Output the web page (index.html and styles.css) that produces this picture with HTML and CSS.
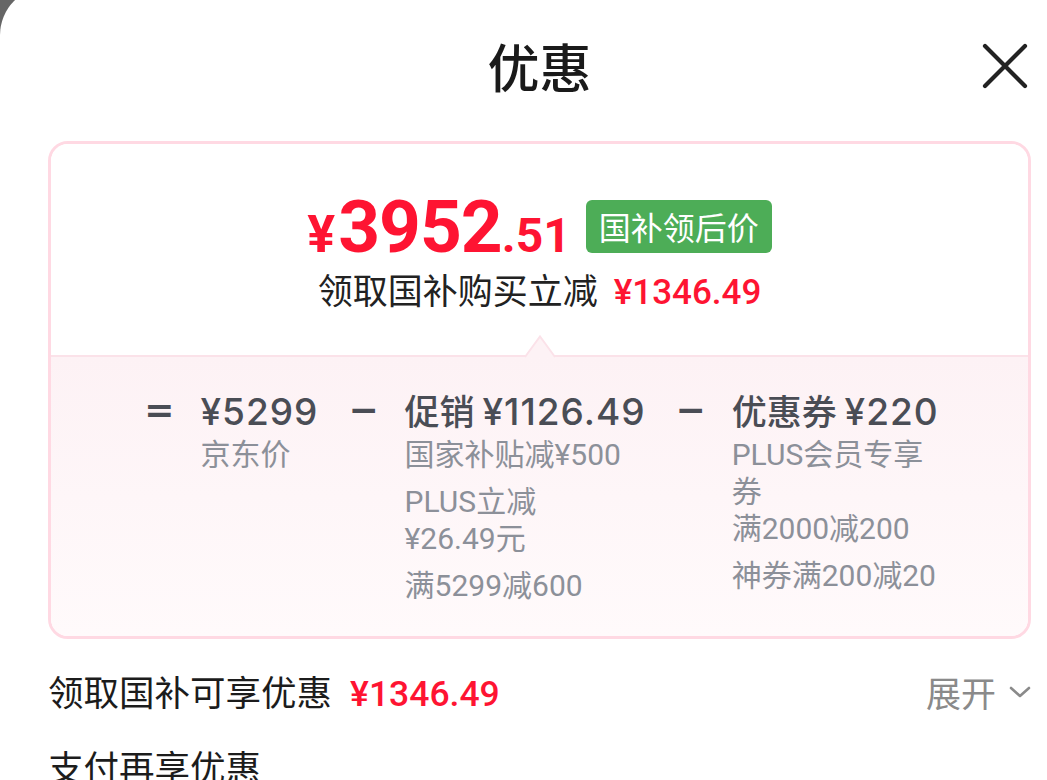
FILE: index.html
```html
<!DOCTYPE html>
<html lang="zh-CN">
<head>
<meta charset="utf-8">
<title>优惠</title>
<link rel="stylesheet" href="styles.css">
</head>
<body>
<div class="sheet">
  <header class="header">
    <h1 class="title">优惠</h1>
    <button class="close" aria-label="关闭">
      <svg viewBox="0 0 46 46" width="46" height="46"><path d="M3 3L43 43M43 3L3 43" stroke="#222" stroke-width="4.2" stroke-linecap="round" fill="none"/></svg>
    </button>
  </header>

  <section class="card">
    <div class="card-top">
      <div class="price-row">
        <div class="price"><span class="yen">¥</span><span class="int">3952</span><span class="dec">.51</span></div>
        <span class="badge">国补领后价</span>
      </div>
      <p class="saving">领取国补购买立减<span class="amount">¥1346.49</span></p>
    </div>
    <div class="card-bottom">
      <svg class="notch" viewBox="0 0 32 24" width="32" height="24"><path d="M0 23L16 1L32 23Z" fill="#fdf2f5"/><path d="M1 22L16 1.5L31 22" stroke="#fbe2e9" stroke-width="2" fill="none"/></svg>
      <div class="formula">
        <span class="op">=</span>
        <div class="term">
          <div class="term-head"><span class="num">¥5299</span></div>
          <div class="term-sub">京东价</div>
        </div>
        <span class="op">−</span>
        <div class="term">
          <div class="term-head">促销 <span class="num">¥1126.49</span></div>
          <div class="term-sub">国家补贴减¥500</div>
          <div class="term-sub">PLUS立减<br>¥26.49元</div>
          <div class="term-sub">满5299减600</div>
        </div>
        <span class="op">−</span>
        <div class="term">
          <div class="term-head">优惠券 <span class="num">¥220</span></div>
          <div class="term-sub">PLUS会员专享<br>券<br>满2000减200</div>
          <div class="term-sub">神券满200减20</div>
        </div>
      </div>
    </div>
  </section>

  <div class="row row-first">
    <div class="row-label">领取国补可享优惠<span class="amount">¥1346.49</span></div>
    <div class="expand">展开<svg viewBox="0 0 22 12" width="22" height="12"><path d="M2 2L11 10L20 2" stroke="#8a8a8a" stroke-width="2.6" fill="none" stroke-linecap="round" stroke-linejoin="round"/></svg></div>
  </div>
  <div class="row row-second">
    <div class="row-label">支付再享优惠</div>
  </div>
</div>
</body>
</html>
```

FILE: styles.css
```css
* {
  box-sizing: border-box;
  margin: 0;
  padding: 0;
}

html, body {
  height: 100%;
}

body {
  background: #666666;
  font-family: "Noto Sans CJK SC", "Noto Sans", sans-serif;
  overflow: hidden;
}

.sheet {
  background: #ffffff;
  margin-top: -13px;
  padding: 13px 16px 0 48px;
  border-top-left-radius: 48px;
  min-height: calc(100% + 13px);
}

.header {
  display: grid;
  grid-template-columns: 1fr auto 1fr;
  height: 141px;
}

.title {
  grid-column: 2;
  align-self: start;
  margin-top: 40px;
  font-size: 52px;
  line-height: 52px;
  font-weight: 500;
  color: #1a1a1a;
}

.close {
  grid-column: 3;
  justify-self: end;
  align-self: start;
  margin-top: 43px;
  margin-right: 3px;
  width: 46px;
  height: 46px;
  background: none;
  border: 0;
  display: flex;
}

.card {
  border: 3px solid #ffd9e3;
  border-radius: 20px;
  overflow: hidden;
}

.card-top {
  padding: 47px 0 40px;
  display: flex;
  flex-direction: column;
  align-items: center;
  background: #ffffff;
}

.price-row {
  display: flex;
  align-items: flex-end;
  gap: 15px;
}

.price {
  font-family: "Roboto", "Noto Sans", sans-serif;
  font-weight: 700;
  color: #fe1432;
  font-size: 72px;
  line-height: 1;
  white-space: nowrap;
  margin-bottom: -11px;
}

.price span {
  line-height: 1;
}

.yen {
  font-size: 52px;
  margin-right: 3px;
}

.int {
  font-size: 73px;
  letter-spacing: -1px;
}

.dec {
  font-size: 48px;
}

.badge {
  background: #4dad57;
  color: #ffffff;
  font-size: 32px;
  line-height: 53px;
  height: 53px;
  padding: 0 13px;
  border-radius: 6px;
  white-space: nowrap;
}

.saving {
  margin-top: 14px;
  font-size: 35px;
  line-height: 44px;
  color: #222222;
  white-space: nowrap;
}

.amount {
  font-family: "Roboto", "Noto Sans", sans-serif;
  font-weight: 500;
  color: #fe1432;
  margin-left: 16px;
}

.card-bottom {
  position: relative;
  border-top: 2px solid #fbe2e9;
  background: linear-gradient(#fdf2f5, #fffafb);
  padding: 31px 0 32px;
}

.notch {
  position: absolute;
  top: -22px;
  left: 50%;
  transform: translateX(-50%);
}

.formula {
  display: flex;
  justify-content: center;
  align-items: flex-start;
  column-gap: 26px;
  padding-left: 8px;
}

.op {
  font-family: "DejaVu Sans", sans-serif;
  font-weight: 700;
  font-size: 36px;
  line-height: 44px;
  color: #4a4d55;
}

.term {
  display: flex;
  flex-direction: column;
  row-gap: 10px;
  margin-right: 4px;
}

.term-head {
  font-size: 35px;
  font-weight: 500;
  line-height: 44px;
  color: #4a4d55;
  white-space: nowrap;
  margin-bottom: -8px;
}

.num {
  font-family: "Inter", "Roboto", sans-serif;
  font-size: 37px;
  letter-spacing: 1px;
}

.term-sub {
  font-family: "Roboto", "Noto Sans CJK SC", sans-serif;
  font-size: 30px;
  line-height: 37px;
  color: #8c9099;
  white-space: nowrap;
}

.row {
  display: flex;
  align-items: center;
  justify-content: space-between;
  height: 44px;
}

.row-first {
  margin-top: 31px;
}

.row-second {
  margin-top: 30px;
}

.row-label {
  font-size: 35.5px;
  line-height: 44px;
  color: #1c1c1c;
  white-space: nowrap;
}

.row-label .amount {
  margin-left: 18px;
}

.expand {
  display: flex;
  align-items: center;
  gap: 13px;
  font-size: 35px;
  line-height: 44px;
  color: #8a8a8a;
}
```
